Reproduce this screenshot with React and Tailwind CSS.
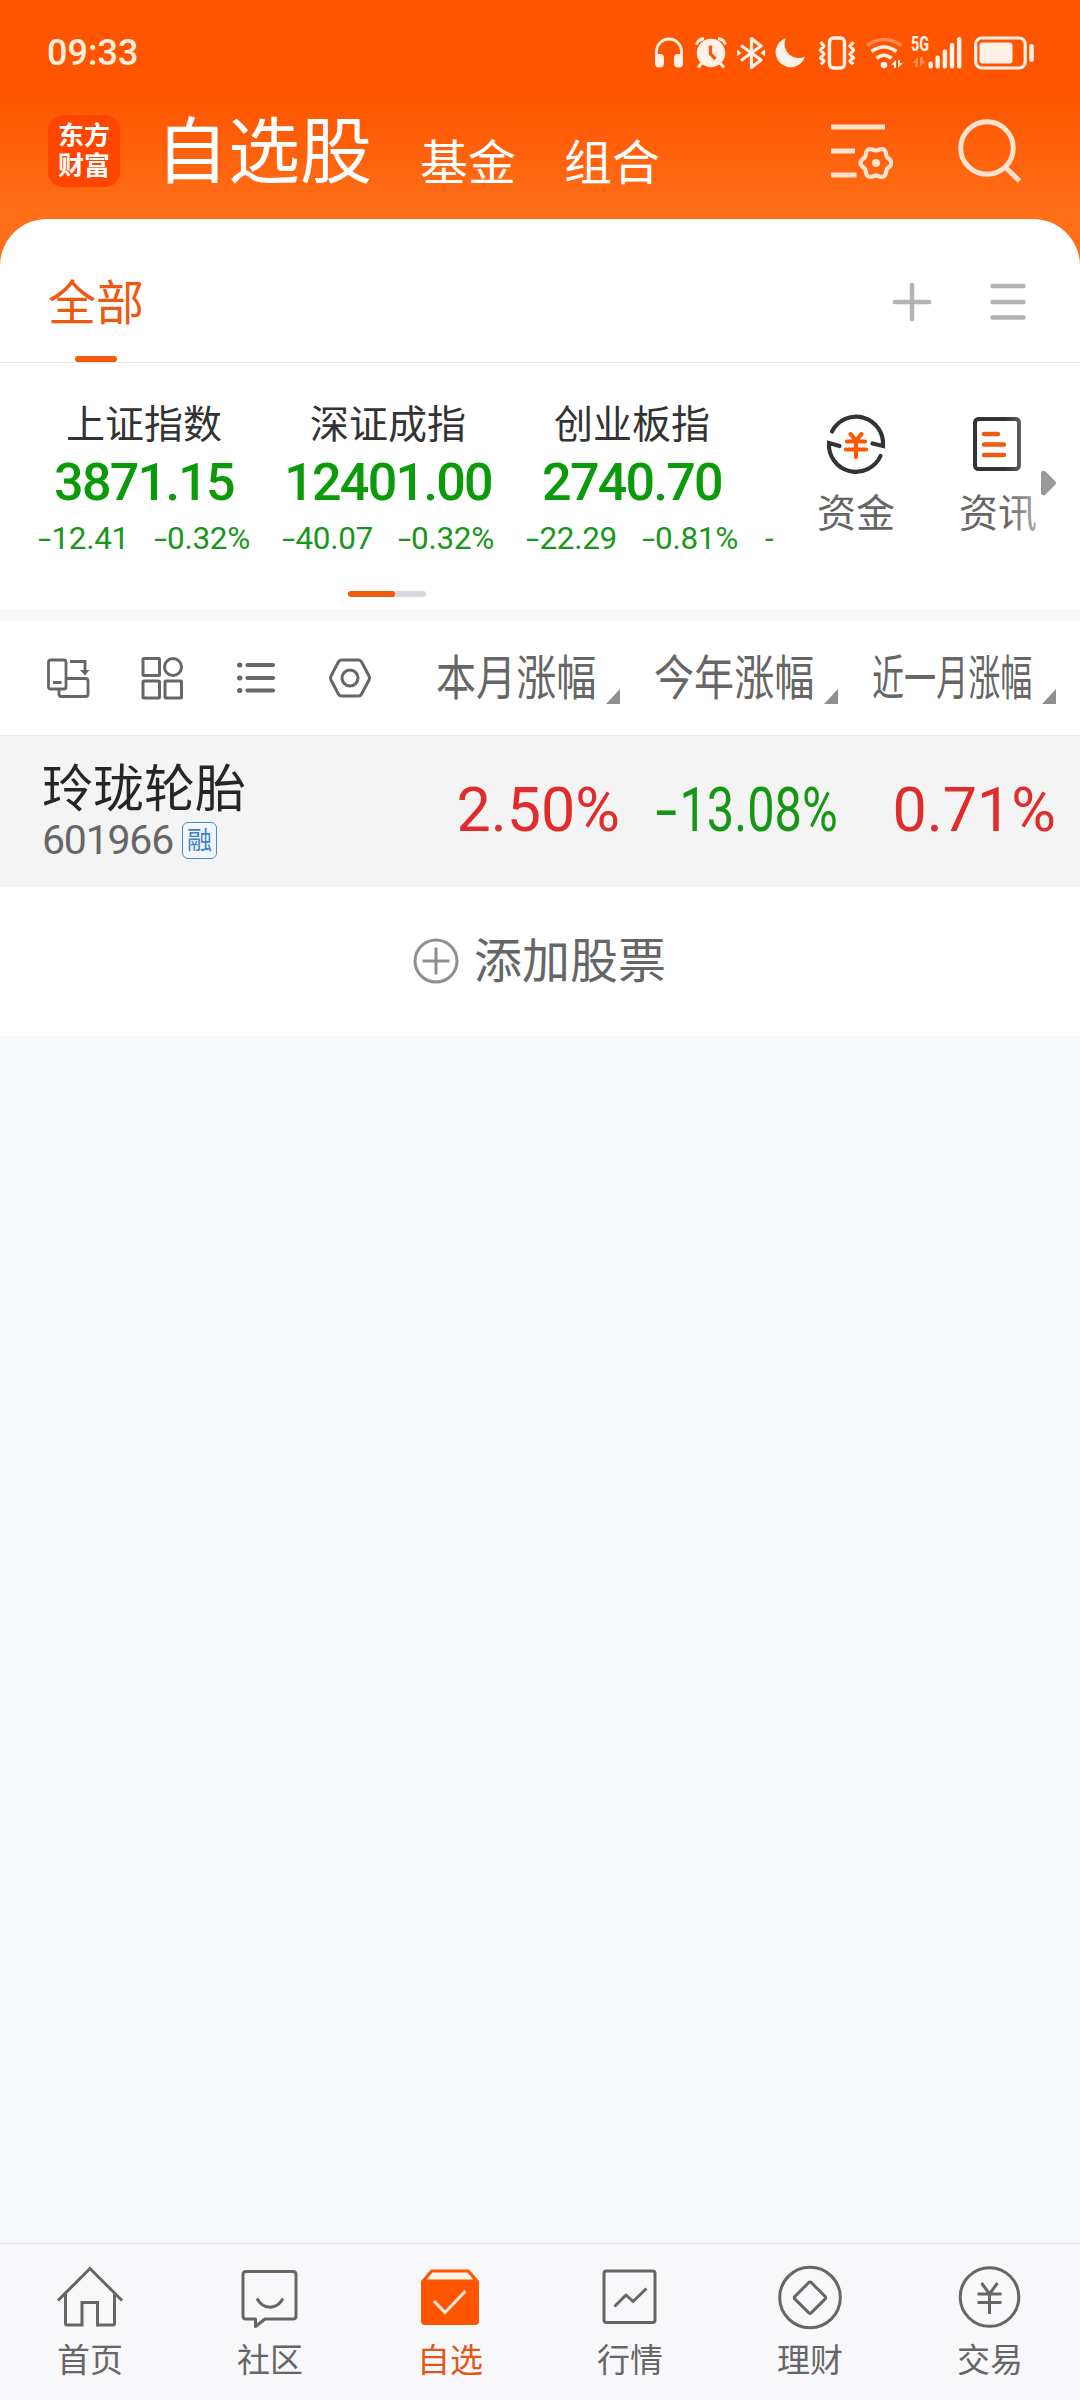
import React from "react";

const INDICES = [
    { name: "上证指数", price: "3871.15", diff: "12.41", pct: "0.32%" },
    { name: "深证成指", price: "12401.00", diff: "40.07", pct: "0.32%" },
    { name: "创业板指", price: "2740.70", diff: "22.29", pct: "0.81%" },
];

// six-lobed outline of the settings cog
const COG_PATH =
    Array.from({ length: 72 }, (_, i) => {
        const a = (i / 72) * Math.PI * 2;
        const r = 14 + 1.5 * Math.cos(6 * a);
        return `${i ? "L" : "M"}${(45 + r * Math.cos(a)).toFixed(2)} ${(41 + r * Math.sin(a)).toFixed(2)}`;
    }).join("") + "z";

function StatusIcons() {
    return (
        <div className="flex items-center text-[#fff1e8]">
            <svg className="w-7 h-[34px]" viewBox="0 0 28 34" fill="currentColor">
                <path d="M1.5 24V15.5a12.5 12.5 0 0 1 25 0V24" fill="none" stroke="currentColor" strokeWidth="2.8" />
                <rect x="0" y="18" width="9" height="13.5" rx="4" />
                <rect x="19" y="18" width="9" height="13.5" rx="4" />
            </svg>
            <svg className="ml-3 w-8 h-[34px]" viewBox="0 0 32 34" fill="none" stroke="currentColor" strokeWidth="3">
                <circle cx="16" cy="17" r="14.2" fill="currentColor" stroke="none" />
                <path d="M1.5 8.5Q3 3.5 9 2.5M30.5 8.5Q29 3.5 23 2.5" />
                <path d="M7 27l-4 4.5M25 27l4 4.5" />
                <path d="M15.5 9.5v8.5l5 5" stroke="#ff5500" strokeWidth="3.2" />
            </svg>
            <svg className="ml-2.5 w-7 h-[34px]" viewBox="0 0 28 34" fill="none" stroke="currentColor" strokeWidth="3.2" strokeLinejoin="round">
                <path d="M4 9.5L24 24l-9.500 7.500V2.500L24 10L4 24.500" />
                <path d="M0 13.500l4.500 3.500-4.500 3.500zM28 13.500l-4.500 3.500 4.500 3.500z" fill="currentColor" stroke="none" />
            </svg>
            <svg className="ml-2.5 w-[30px] h-[34px]" viewBox="0 0 30 34" fill="currentColor">
                <path d="M11 2A15 15 0 1 0 30 20.5A14 14 0 0 1 11 2z" />
            </svg>
            <svg className="ml-[13px] w-[38px] h-[34px]" viewBox="0 0 38 34" fill="none" stroke="currentColor" strokeWidth="3.4" strokeLinejoin="round">
                <rect x="11.5" y="2" width="15" height="30" rx="4" />
                <path d="M2.500 6l3.500 4-3.500 4 3.500 4-3.500 4 3.500 3-3 3.500M35.500 6l-3.500 4 3.500 4-3.500 4 3.500 4-3.500 3 3 3.500" />
            </svg>
            <svg className="ml-2.5 w-[38px] h-[34px]" viewBox="0 0 38 34" fill="none" stroke="currentColor" strokeWidth="3.6">
                <path d="M1 9.500Q18 -2.500 35.500 9.500" opacity=".35" />
                <path d="M5.500 15.500Q18 6.500 30.500 15.500" />
                <path d="M10.500 22.500Q18 16 25.500 22.500" />
                <circle cx="18" cy="29" r="3.300" fill="currentColor" stroke="none" />
                <path d="M30 32v-8l-5 5h3v3zM32 24v8l5-5h-3v-3z" fill="currentColor" stroke="none" />
            </svg>
            <div className="relative ml-[7px] w-[51px] h-[34px]">
                <svg className="w-[51px] h-[34px]" viewBox="0 0 51 34" fill="currentColor">
                    <path d="M7 31V21l-6 6h3v4zM9 21v10l6-6h-3v-4z" opacity=".35" />
                    <rect x="17.500" y="25.500" width="4.400" height="7" rx="2" />
                    <rect x="24.500" y="19.500" width="4.400" height="13" rx="2" />
                    <rect x="31.700" y="13.500" width="4.400" height="19" rx="2" />
                    <rect x="38.800" y="7" width="4.400" height="25.500" rx="2" />
                    <rect x="46" y="1" width="4.400" height="31.500" rx="2" />
                </svg>
                <span className="absolute left-0 top-[-2px] origin-left scale-x-[0.720] font-['Roboto'] text-[20px] leading-5 font-bold">5G</span>
            </div>
            <svg className="ml-3 w-[60px] h-[34px]" viewBox="0 0 60 34" fill="currentColor">
                <rect x="1.700" y="2" width="49.500" height="30" rx="6" fill="none" stroke="currentColor" strokeWidth="3.200" />
                <rect x="5.500" y="6.500" width="33" height="21" rx="3" />
                <rect x="55.300" y="8" width="4.500" height="18" rx="2" />
            </svg>
        </div>
    );
}

function Header() {
    return (
        <header className="h-[266px] bg-[linear-gradient(180deg,#ff5500_95px,#ff6f19_215px)]">
            <div className="flex h-[105px] items-center justify-between pl-[47px] pr-[46px]">
                <span className="font-['Roboto'] text-[36px] leading-none font-medium text-[#ffeedd]">09:33</span>
                <StatusIcons />
            </div>
            <div className="flex h-[92px] items-center pl-12 text-white">
                <div className="flex h-[72px] w-[72px] flex-col items-center justify-center rounded-[15px] bg-[#ff4500] pb-1 text-[26px] leading-[30px] font-bold">
                    <span>东方</span>
                    <span>财富</span>
                </div>
                <div className="mt-[-11px] ml-9 flex items-end gap-12 text-[48px] leading-[45px]">
                    <span className="text-[72px] leading-none">自选股</span>
                    <span>基金</span>
                    <span>组合</span>
                </div>
                <svg className="ml-[171px] mt-0.5 w-[62px] h-[60px]" viewBox="0 0 62 60" fill="none" stroke="#ffe3cf" strokeWidth="5">
                    <path d="M0 5h54M0 29h24M0 53h25.500" />
                    <path d={COG_PATH} strokeWidth="4.200" strokeLinejoin="round" />
                    <circle cx="45" cy="41" r="4" fill="#ffe3cf" stroke="none" />
                </svg>
                <svg className="ml-[65px] w-[64px] h-[64px]" viewBox="0 0 64 64" fill="none" stroke="#ffe3cf" strokeWidth="5">
                    <circle cx="29" cy="29" r="26.300" />
                    <path d="M47.500 48.500l14 13.500" />
                </svg>
            </div>
        </header>
    );
}

function GroupTabs() {
    return (
        <div className="flex h-[144px] items-center justify-between border-b border-[#e6e6e6] pl-12 pr-[54px]">
            <div className="flex h-full flex-col items-center pt-[50px]">
                <span className="text-[48px] leading-[60px] text-[#ec5a12]">全部</span>
                <span className="mt-[27px] h-1.5 w-[42px] rounded-full bg-[#f4580c]" />
            </div>
            <div className="mt-[23px] flex items-center gap-[58px]">
                <svg className="w-10 h-10" viewBox="0 0 40 40" stroke="#b3b3b3" strokeWidth="4.500" strokeLinecap="round">
                    <path d="M3 20h34M20 3v34" />
                </svg>
                <svg className="w-9 h-10" viewBox="0 0 36 40" stroke="#b3b3b3" strokeWidth="4.500" strokeLinecap="round">
                    <path d="M2.500 4h31M2.500 20h31M2.500 35.500h31" />
                </svg>
            </div>
        </div>
    );
}

function IndexCard({ item }) {
    return (
        <div className="w-[244px] shrink-0 px-4 text-center">
            <div className="text-[39px] leading-[50px] text-[#333]">{item.name}</div>
            <div className="mt-0.5 font-['Roboto'] text-[52px] leading-[70px] font-medium tracking-[-1.700px] text-[#0a9a0a]">{item.price}</div>
            <div className="flex justify-between font-['Roboto'] text-[31.500px] leading-[42px] tracking-[-0.300px] text-[#1a971a]">
                <span>
                    <span className="mr-[5px] inline-block origin-left scale-x-150">-</span>
                    {item.diff}
                </span>
                <span>
                    <span className="mr-[5px] inline-block origin-left scale-x-150">-</span>
                    {item.pct}
                </span>
            </div>
        </div>
    );
}

function IndexPanel() {
    return (
        <div className="relative flex h-[246px]">
            <div className="w-[774px] overflow-hidden pt-[33px]">
                <div className="flex pl-[22px]">
                    {INDICES.map((item) => (
                        <IndexCard key={item.name} item={item} />
                    ))}
                    <div className="shrink-0 pl-[11px] pt-[122px] font-['Roboto'] text-[31px] leading-[42px] text-[#1a971a]">-</div>
                </div>
                <div className="mx-auto mt-[31px] h-1.5 w-[78px] rounded-full bg-[#d5d8dd]">
                    <div className="h-1.5 w-[47px] rounded-full bg-[#f2590f]" />
                </div>
            </div>
            <div className="flex pl-[11px] pt-[49px] text-[39px] leading-[48px] text-[#666]">
                <div className="flex w-[142px] flex-col items-center">
                    <svg className="w-16 h-16" viewBox="0 0 64 64" fill="none" stroke="#333" strokeWidth="4.200" strokeLinecap="round">
                        <path d="M8 19.500A27 27 0 0 1 59 34l-10.500-2.500" />
                        <path d="M56.500 44A27 27 0 0 1 5 31l10.500 3" />
                        <path d="M26.500 22l5.500 6.500 5.500-6.500M23 29.500h18M22 37.500h20M32 29v16" stroke="#ff5500" />
                    </svg>
                    <span className="mt-2.5">资金</span>
                </div>
                <div className="flex w-[142px] flex-col items-center">
                    <svg className="w-16 h-16" viewBox="0 0 64 64" fill="none" stroke="#333" strokeWidth="4" strokeLinecap="round">
                        <rect x="9" y="7" width="44" height="50" rx="3.500" />
                        <path d="M18 22h14M18 32.500h20M18 43h20" stroke="#ee5a12" strokeWidth="4.400" />
                    </svg>
                    <span className="mt-2.5">资讯</span>
                </div>
            </div>
            <div className="absolute right-[43px] top-10 h-36 w-8 bg-linear-to-r from-white/0 to-white/45" />
            <svg className="absolute left-[1041px] top-[107px] w-4 h-[26px]" viewBox="0 0 16 26" fill="#999">
                <path d="M0 2.500Q1 0 4 1L14.500 11.500Q15.500 13 14.500 14.500L4 25Q1 26 0 23.500z" />
            </svg>
        </div>
    );
}

function SortHeader({ children }) {
    return (
        <div className="flex w-[218px] items-center justify-end text-[48px] leading-[60px] text-[#666]">
            <div className="mb-[9px] w-[162px] whitespace-nowrap">{children}</div>
            <svg className="ml-2 mt-9 w-[14px] h-[15px]" viewBox="0 0 14 15" fill="#8e8e93">
                <path d="M14 0v15H0z" />
            </svg>
        </div>
    );
}

function Toolbar() {
    return (
        <div className="flex h-[115px] items-center border-b border-[#e9e9e9]">
            <div className="flex w-[402px] gap-[46px] pl-11">
                <svg className="w-12 h-12" viewBox="0 0 48 48" fill="none" stroke="#666" strokeWidth="2.800">
                    <rect x="4.500" y="6" width="17.500" height="29" rx="2" />
                    <path d="M9 28.500h8.500M26 7.500h15V20M15 36v4q0 2.500 2.500 2.500h24q2.500 0 2.500-2.500V27q0-2.500-2.500-2.500H23" />
                    <path d="M36 16h9.500L41 21.500z" fill="#666" stroke="none" />
                </svg>
                <svg className="w-12 h-12" viewBox="0 0 48 48" fill="none" stroke="#666" strokeWidth="3">
                    <rect x="5" y="4.500" width="16.500" height="17" rx="1" />
                    <circle cx="35" cy="13" r="8.500" />
                    <rect x="5" y="27" width="16.500" height="17" rx="1" />
                    <rect x="27" y="27" width="16.500" height="17" rx="1" />
                </svg>
                <svg className="w-12 h-12" viewBox="0 0 48 48" fill="none" stroke="#666" strokeWidth="4.200" strokeLinecap="round">
                    <path d="M15.500 11H41M15.500 24H41M15.500 36.500H41" />
                    <path d="M7.500 11h.4M7.500 24h.4M7.500 36.500h.4" strokeWidth="5" />
                </svg>
                <svg className="w-12 h-12" viewBox="0 0 48 48" fill="none" stroke="#666" strokeWidth="3" strokeLinejoin="round">
                    <path d="M15.500 6h17q2 0 3 1.800L43 22q1 2 0 4L35.500 40.200q-1 1.800-3 1.800h-17q-2 0-3-1.800L5 26q-1-2 0-4L12.500 7.800q1-1.800 3-1.800z" />
                    <circle cx="24" cy="24" r="8" />
                </svg>
            </div>
            <SortHeader>
                <span className="inline-block origin-left scale-x-[0.835]">本月涨幅</span>
            </SortHeader>
            <SortHeader>
                <span className="inline-block origin-left scale-x-[0.835]">今年涨幅</span>
            </SortHeader>
            <SortHeader>
                <span className="inline-block origin-left scale-x-[0.668]">近一月涨幅</span>
            </SortHeader>
        </div>
    );
}

function StockRow() {
    return (
        <div className="flex h-[150px] items-center border-b border-[#ebebeb] bg-[#f4f4f4]">
            <div className="w-[402px] pl-[42px]">
                <div className="mt-[-4px] mb-[3px] text-[51px] leading-[60px] text-[#262626]">玲珑轮胎</div>
                <div className="flex items-center">
                    <span className="font-['Roboto'] text-[41px] leading-[44px] tracking-[-1.200px] text-[#666]">601966</span>
                    <span className="ml-[9px] flex h-[37px] w-[35px] items-center justify-center rounded-[6px] border border-[#4a88cc] bg-[#f1f6fb] pb-[3px] text-[25px] leading-none text-[#3f80c6]">融</span>
                </div>
            </div>
            <div className="flex font-['Roboto'] text-[61px] leading-none whitespace-nowrap">
                <div className="w-[218px] text-right text-[#e02c2c]">2.50%</div>
                <div className="flex w-[218px] justify-end text-[#159615]">
                    <span className="origin-right scale-x-[0.800]">
                        <span className="mr-[13px] inline-block origin-left scale-x-[1.600]">-</span>
                        13.08%
                    </span>
                </div>
                <div className="w-[218px] text-right text-[#e02c2c]">0.71%</div>
            </div>
        </div>
    );
}

function NavItem({ label, active, children }) {
    return (
        <div className={`flex flex-1 flex-col items-center ${active ? "text-[#e2571a]" : "text-[#666]"}`}>
            <svg className="w-[72px] h-[72px]" viewBox="0 0 72 72" fill="none" stroke="currentColor" strokeWidth="3">
                {children}
            </svg>
            <span className="mt-[5px] text-[33px] leading-[40px]">{label}</span>
        </div>
    );
}

function BottomNav() {
    return (
        <nav className="flex h-[157px] border-t border-[#e3e4e6] bg-[#f8f8fa] pt-[17px]">
            <NavItem label="首页">
                <path d="M4 39.500L36 7.500l32 32M11.500 33v29.500q0 1.500 1.500 1.500h15V41.500h15.500V64h15.500q1.500 0 1.500-1.500V33" />
            </NavItem>
            <NavItem label="社区">
                <path d="M12 10.500h47q3 0 3 3V55q0 3-3 3H31l-9.500 7.500V58H12q-3 0-3-3V13.500q0-3 3-3z" strokeLinejoin="round" />
                <path d="M23 37.500c6 11.500 20 11.500 26 0" />
            </NavItem>
            <NavItem label="自选" active>
                <path d="M7 20l10-11.500h38L65 20v40q0 4-4 4H11q-4 0-4-4z" fill="#ff5500" stroke="none" />
                <path d="M18.500 11.500h35l6 7h-47z" fill="#fff3ea" stroke="none" />
                <path d="M20 40l11 11.500L51.500 30" stroke="#ffe9d8" />
            </NavItem>
            <NavItem label="行情">
                <rect x="10" y="10" width="51" height="51.500" rx="2.500" />
                <path d="M20.500 45.500L32 34l7 6.500L52.500 27.500" strokeLinejoin="round" />
            </NavItem>
            <NavItem label="理财">
                <circle cx="36" cy="36.500" r="30.300" />
                <path d="M34.800 21.500q1.200-1 2.400 0l14 14q1 1.200 0 2.400l-14 14q-1.200 1-2.400 0l-14-14q-1-1.200 0-2.400z" />
            </NavItem>
            <NavItem label="交易">
                <circle cx="35.500" cy="36" r="29.300" />
                <path d="M27.500 22l8 11 8-11M23.500 33h24M23.500 41.500h24M35.500 33v20" />
            </NavItem>
        </nav>
    );
}

export default function App() {
    return (
        <div className="flex h-[2400px] w-[1080px] flex-col overflow-hidden bg-[#f7f8fa] font-['Noto_Sans_CJK_SC',sans-serif]">
            <Header />
            <main className="relative mt-[-47px] flex-1">
                <section className="rounded-t-[47px] bg-white">
                    <GroupTabs />
                    <IndexPanel />
                </section>
                <section className="mt-3 bg-white">
                    <Toolbar />
                    <StockRow />
                    <div className="flex h-[150px] items-center pl-[413px]">
                        <svg className="w-[46px] h-[46px]" viewBox="0 0 46 46" fill="none" stroke="#8e8e93" strokeWidth="3">
                            <circle cx="23" cy="23" r="21" />
                            <path d="M9.500 23h27M23 9.500v27" />
                        </svg>
                        <span className="ml-[15px] mt-[-8px] text-[48px] leading-none text-[#666]">添加股票</span>
                    </div>
                </section>
            </main>
            <BottomNav />
        </div>
    );
}
